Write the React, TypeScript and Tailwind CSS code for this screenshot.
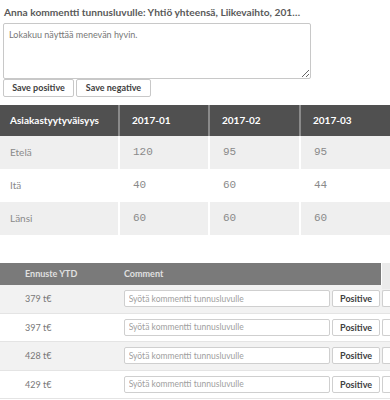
const sans = "font-['Lato','Open_Sans',sans-serif]"
const mono = "font-['Liberation_Mono','DejaVu_Sans_Mono',monospace]"

const kpiRows = [
  { name: 'Etelä', values: ['120', '95', '95'] },
  { name: 'Itä', values: ['40', '60', '44'] },
  { name: 'Länsi', values: ['60', '60', '60'] },
]

const forecast = ['379 t€', '397 t€', '428 t€', '429 t€']

export default function App() {
  return (
    <div className={`w-[390px] h-[400px] overflow-hidden bg-white ${sans}`}>
      <div className="pl-[4px] pt-[6px] h-[23px] text-[10.2px] font-bold text-[#595959] leading-[12px] whitespace-nowrap">
        Anna kommentti tunnusluvulle: Yhtiö yhteensä, Liikevaihto, 201…
      </div>
      <div className="pl-[3px]">
        <textarea
          defaultValue="Lokakuu näyttää menevän hyvin."
          className="block w-[308px] h-[56px] border border-[#c8c8c8] rounded-[2px] px-[5px] py-[5px] text-[9px] text-[#777] leading-[11px] resize"
        />
        <div className="flex gap-[2px] mt-0">
          <button className="w-[71px] h-[18px] border border-[#c8c8c8] rounded-[2px] bg-white text-[9px] font-bold text-[#404040]">
            Save positive
          </button>
          <button className="w-[75px] h-[18px] border border-[#c8c8c8] rounded-[2px] bg-white text-[9px] font-bold text-[#404040]">
            Save negative
          </button>
        </div>
      </div>

      <div className="mt-[8px]">
        <div className="grid grid-cols-[118px_90px_91px_91px] h-[31px] bg-[#505050] text-white text-[10px] font-bold">
          <div className="flex items-center pl-[10px]">Asiakastyytyväisyys</div>
          <div className="flex items-center pl-[12px] border-l-2 border-[#8a8a8a]">2017-01</div>
          <div className="flex items-center pl-[12px] border-l-2 border-[#8a8a8a]">2017-02</div>
          <div className="flex items-center pl-[12px] border-l-2 border-[#8a8a8a]">2017-03</div>
        </div>
        {kpiRows.map((r, i) => (
          <div
            key={r.name}
            className={`grid grid-cols-[118px_90px_91px_91px] h-[33px] text-[10px] text-[#8a8a8a] ${i % 2 === 0 ? 'bg-[#efefef]' : 'bg-white'}`}
          >
            <div className="flex items-center pl-[10px]">{r.name}</div>
            {r.values.map((v, j) => (
              <div key={j} className={`flex items-center pl-[13px] border-l-2 border-white text-[11px] ${mono}`}>
                {v}
              </div>
            ))}
          </div>
        ))}
      </div>

      <div className="mt-[28px] relative">
        <div className="flex h-[22px] w-[381px] bg-[#7a7a7a] text-[#e0e0e0] text-[9px] font-bold items-center">
          <div className="w-[124px] pl-[25px]">Ennuste YTD</div>
          <div>Comment</div>
        </div>
        <div className="absolute right-0 top-0 w-[8px] h-[26px] bg-[#ebebeb]" />
        {forecast.map((f, i) => (
          <div
            key={f}
            className={`flex items-center h-[28.5px] text-[9px] text-[#777] border-b border-[#e4e4e4] ${i % 2 === 0 ? 'bg-[#f2f2f2]' : 'bg-white'}`}
          >
            <div className="w-[124px] pl-[25px]">{f}</div>
            <input
              placeholder="Syötä kommentti tunnusluvulle"
              className="w-[207px] h-[17px] border border-[#cfcfcf] rounded-[2px] bg-white px-[4px] text-[8.5px] placeholder:text-[#a0a0a0]"
            />
            <button className="ml-[2px] w-[48px] h-[17px] border border-[#cfcfcf] rounded-[2px] bg-white text-[9px] font-bold text-[#404040]">
              Positive
            </button>
            <div className="ml-[2px] w-[8px] h-[17px] border border-[#cfcfcf] border-r-0 rounded-l-[2px] bg-white" />
          </div>
        ))}
      </div>
    </div>
  )
}
